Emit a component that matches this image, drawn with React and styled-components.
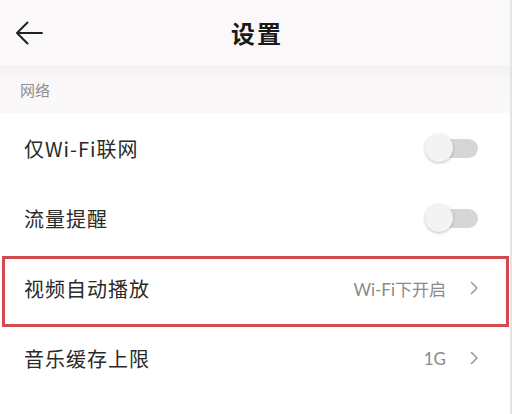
import React from "react";
import styled, { createGlobalStyle } from "styled-components";

const GlobalStyle = createGlobalStyle`
  html, body {
    margin: 0;
    padding: 0;
    background: #ffffff;
  }
  body {
    font-family: "Noto Sans CJK SC", "Noto Sans", sans-serif;
  }
`;

const rows = [
  { label: "仅Wi-Fi联网", type: "switch" },
  { label: "流量提醒", type: "switch" },
  { label: "视频自动播放", type: "link", value: "Wi-Fi下开启", marked: true },
  { label: "音乐缓存上限", type: "link", value: "1G" },
];

export default function App() {
  return <Page>
    <GlobalStyle />
    <Header>
      <BackButton>
        <svg width="28" height="24" viewBox="0 0 28 24" fill="none">
          <path d="M27 12H2M12.5 1.5L2 12l10.5 10.5" stroke="#222" strokeWidth="2" strokeLinecap="round" strokeLinejoin="round" />
        </svg>
      </BackButton>
      <Title>设置</Title>
    </Header>

    <Section>网络</Section>

    {rows.map(({ label, type, value, marked }) =>
      <Row key={label} $marked={marked}>
        <Label>{label}</Label>
        {type === "switch"
          ? <Switch><Knob /></Switch>
          : <Right>
            <Value>{value}</Value>
            <svg width="9" height="14" viewBox="0 0 9 14" fill="none">
              <path d="M1.5 1.5L7 7l-5.5 5.5" stroke="#9a9a9a" strokeWidth="1.6" strokeLinecap="round" strokeLinejoin="round" />
            </svg>
          </Right>}
      </Row>
    )}
  </Page>
}

const Page = styled.div`
  width: 512px;
  height: 414px;
  overflow: hidden;
  background: #ffffff;
  border-right: 2px solid #e4e4e4;
  box-sizing: border-box;
`;

const Header = styled.div`
  position: relative;
  height: 66px;
  display: flex;
  align-items: center;
  justify-content: center;
  background: #faf8f9;
`;

const BackButton = styled.div`
  position: absolute;
  left: 15px;
  top: 21px;
  display: flex;
`;

const Title = styled.div`
  font-size: 24px;
  font-weight: 700;
  color: #1a1a1a;
  letter-spacing: 2px;
  margin: -2px 0 0 4px;
`;

const Section = styled.div`
  height: 47px;
  display: flex;
  align-items: center;
  padding-left: 20px;
  font-size: 15px;
  color: #8e8e8e;
  background: linear-gradient(#f1eff0, #f9f7f8 30%, #faf8f9);
`;

const Row = styled.div`
  position: relative;
  height: 70px;
  display: flex;
  align-items: center;
  justify-content: space-between;
  padding: 0 30px 0 24px;

  ${({ $marked }) => $marked && `
    &::after {
      content: "";
      position: absolute;
      left: 2px;
      right: 1px;
      top: 3px;
      bottom: -4px;
      border: 3px solid #d24a4d;
    }
  `}
`;

const Label = styled.div`
  font-size: 20px;
  color: #2a2a2a;
  letter-spacing: 1px;
`;

const Right = styled.div`
  display: flex;
  align-items: center;
  gap: 24px;
  margin-right: 1px;
`;

const Value = styled.div`
  font-family: "Lato", "Noto Sans CJK SC", sans-serif;
  font-size: 17px;
  color: #8a8a8a;
`;

const Switch = styled.div`
  position: relative;
  width: 50px;
  height: 19px;
  border-radius: 10px;
  background: #d6d6d6;
  margin-right: 2px;
`;

const Knob = styled.div`
  position: absolute;
  left: -3px;
  top: -5px;
  width: 28px;
  height: 28px;
  border-radius: 50%;
  background: #f3f3f3;
  box-shadow: 0 1px 3px rgba(0, 0, 0, 0.25);
`;
